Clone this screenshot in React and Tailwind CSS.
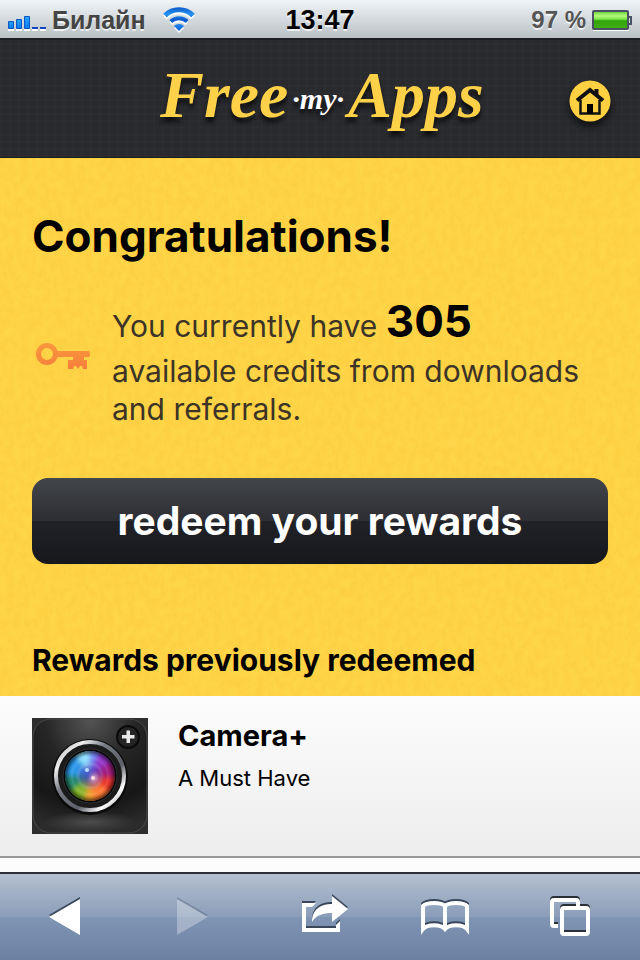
import React from 'react';

const rewards = [{ id: 1, name: 'Camera+', description: 'A Must Have' }];

function StatusBar() {
  return (
    <div className="grid h-10 grid-cols-3 items-center border-b-2 border-[#1d1f22] bg-linear-to-b from-[#eff4f7] to-[#bac1c5] px-2 font-['Liberation_Sans'] text-[25px] font-bold text-[#444] [text-shadow:0_2px_0_#ffffffb0]">
      <div className="flex items-center gap-1">
        <svg width="40" height="24" viewBox="0 0 40 24" aria-hidden="true">
          <defs>
            <linearGradient id="bars" x1="0" y1="0" x2="0" y2="1">
              <stop offset="0" stopColor="#28a6fb" />
              <stop offset="1" stopColor="#0a79ee" />
            </linearGradient>
          </defs>
          <path d="M0 21h6v2H0zM8 21h6v2H8zM16 21h6v2h-6zM24 21h6v2h-6zM32 21h6v2h-6z" fill="#fff" />
          <g fill="url(#bars)" stroke="#0b55c4">
            <path d="M.5 13.500h5v7h-5z" />
            <path d="M8.500 11.500h5v9h-5z" />
            <path d="M16.500 8.500h5v12h-5z" />
          </g>
          <path d="M24 19h6v2h-6zM32 19h6v2h-6z" fill="#1345c2" />
        </svg>
        <span>Билайн</span>
        <svg className="ml-3" width="34" height="28" viewBox="0 0 34 28" aria-hidden="true">
          <defs>
            <linearGradient id="wifi" x1="0" y1="0" x2="0" y2="28" gradientUnits="userSpaceOnUse">
              <stop offset="0" stopColor="#0a50c0" />
              <stop offset=".3" stopColor="#2493f2" />
              <stop offset=".5" stopColor="#0a55cc" />
              <stop offset=".65" stopColor="#1d86ee" />
              <stop offset="1" stopColor="#0850c4" />
            </linearGradient>
            <g id="waves">
              <path d="M3 9.500a20 20 0 0 1 28 0" fill="none" strokeWidth="5" />
              <path d="M8.800 15.500a12 12 0 0 1 16.400 0" fill="none" strokeWidth="4" />
              <path d="M12 20a7 7 0 0 1 10 0L17 25z" strokeWidth="0" />
            </g>
          </defs>
          <use href="#waves" y="2" stroke="#fff" fill="#fff" />
          <use href="#waves" stroke="url(#wifi)" fill="url(#wifi)" />
        </svg>
      </div>
      <time className="text-center text-[27px] text-black">13:47</time>
      <div className="flex items-center justify-end gap-1">
        <span className="text-2xl text-[#555]">97 %</span>
        <svg width="42" height="24" viewBox="0 0 42 24" aria-hidden="true">
          <defs>
            <linearGradient id="charge" x1="0" y1="0" x2="0" y2="1">
              <stop offset="0" stopColor="#70d440" />
              <stop offset=".25" stopColor="#b6fb7c" />
              <stop offset=".45" stopColor="#7be444" />
              <stop offset=".55" stopColor="#31a50c" />
              <stop offset="1" stopColor="#3fae12" />
            </linearGradient>
          </defs>
          <path d="M3 22h36" stroke="#fff" strokeWidth="2" />
          <rect x="3" y="3" width="35" height="18" rx="1" fill="#c9f2ad" stroke="#4b5064" strokeWidth="2" />
          <rect x="4" y="4" width="33" height="16" fill="url(#charge)" />
          <path d="M38 9h3v7h-3" fill="none" stroke="#4b5064" strokeWidth="2" />
        </svg>
      </div>
    </div>
  );
}

function Header() {
  return (
    <header className="flex h-[118px] items-center justify-between border-b border-[#1b1c1f] bg-[#292a2e] bg-[repeating-linear-gradient(0deg,#ffffff03_0_2px,transparent_2px_7px),repeating-linear-gradient(90deg,#ffffff03_0_2px,transparent_2px_9px)] pt-1 pr-7 pl-40">
      <h1 className="flex items-center pb-3 font-['Liberation_Serif'] font-bold text-[#ffd149] italic [text-shadow:0_5px_4px_#000a]">
        <span className="text-[66px] leading-none">Free</span>
        <span className="px-1 pt-2 text-3xl text-white">·my·</span>
        <span className="text-[66px] leading-none">Apps</span>
      </h1>
      <a href="#home" aria-label="Home" className="drop-shadow-[0_5px_4px_#000a]">
        <svg width="44" height="44" viewBox="0 0 44 44" aria-hidden="true">
          <circle cx="22" cy="22" r="20.500" fill="#ffd042" />
          <path d="M9 21.500 22 11l13 10.500" fill="none" stroke="#111" strokeWidth="4" />
          <path d="M26.500 10h4v8l-4-3z" fill="#111" />
          <path d="M12.500 21v13.500h19V21" fill="none" stroke="#111" strokeWidth="2.500" />
          <path d="M19 25h6v10h-6z" fill="#000" />
        </svg>
      </a>
    </header>
  );
}

function Felt() {
  return (
    <svg className="absolute inset-0 -z-10 size-full" aria-hidden="true">
      <filter id="felt" x="0" y="0" width="100%" height="100%" colorInterpolationFilters="sRGB">
        <feTurbulence type="fractalNoise" baseFrequency=".14 .1" numOctaves="3" seed="4" />
        <feColorMatrix values="0 0 0 0 .97  0 0 0 0 .7  0 0 0 0 .14  2.500 0 0 0 -.7" />
      </filter>
      <rect width="100%" height="100%" filter="url(#felt)" opacity=".17" />
    </svg>
  );
}

function KeyIcon() {
  return (
    <svg className="shrink-0" width="60" height="32" viewBox="0 0 60 32" aria-hidden="true">
      <defs>
        <linearGradient id="key" x1="0" y1="0" x2="0" y2="32" gradientUnits="userSpaceOnUse">
          <stop offset="0" stopColor="#f9983c" />
          <stop offset="1" stopColor="#f5783c" />
        </linearGradient>
      </defs>
      <circle cx="15" cy="11" r="8.500" fill="none" stroke="url(#key)" strokeWidth="5" />
      <path d="M25 8h32q2 3 0 6h-5v3h3v9h-4l-1-3h-2l-2 3-2-3h-2l-1 3h-5v-9h5v-3H25z" fill="url(#key)" />
    </svg>
  );
}

function CameraIcon() {
  return (
    <svg className="shrink-0" width="116" height="116" viewBox="0 0 116 116" aria-hidden="true">
      <defs>
        <radialGradient id="body" cx=".5" cy="0" r="1">
          <stop offset="0" stopColor="#555" />
          <stop offset=".4" stopColor="#262626" />
          <stop offset=".75" stopColor="#171717" />
          <stop offset="1" stopColor="#2b2b2b" />
        </radialGradient>
        <linearGradient id="chrome" x1="0" y1="0" x2="1" y2="1">
          <stop offset="0" stopColor="#aaa" />
          <stop offset=".2" stopColor="#eee" />
          <stop offset=".38" stopColor="#777b84" />
          <stop offset=".65" stopColor="#5d6068" />
          <stop offset=".82" stopColor="#fff" />
          <stop offset="1" stopColor="#777" />
        </linearGradient>
        <radialGradient id="glow">
          <stop offset="0" stopColor="#3443c8" stopOpacity=".9" />
          <stop offset=".5" stopColor="#4a40b8" stopOpacity=".5" />
          <stop offset="1" stopColor="#4a40b8" stopOpacity="0" />
        </radialGradient>
        <radialGradient id="rim">
          <stop offset=".8" stopColor="#000" stopOpacity="0" />
          <stop offset="1" stopColor="#000" stopOpacity=".6" />
        </radialGradient>
        <radialGradient id="shine">
          <stop offset="0" stopColor="#777" stopOpacity=".5" />
          <stop offset="1" stopColor="#777" stopOpacity="0" />
        </radialGradient>
        <clipPath id="glass">
          <circle cx="58" cy="58" r="25" />
        </clipPath>
        <filter id="soft" x="-30%" y="-30%" width="160%" height="160%" colorInterpolationFilters="sRGB">
          <feGaussianBlur stdDeviation="2.500" />
        </filter>
      </defs>
      <path d="M0 0h116v116H0z" fill="#2e2e2e" />
      <rect x="1" y="1" width="114" height="114" rx="18" fill="url(#body)" stroke="#484848" />
      <ellipse cx="58" cy="104" rx="46" ry="11" fill="url(#shine)" />
      <circle cx="58" cy="59" r="38" fill="#0b0b0b" />
      <circle cx="58" cy="58" r="34" fill="#1b1b1c" stroke="url(#chrome)" strokeWidth="4" />
      <circle cx="58" cy="58" r="27" fill="#050505" stroke="#303033" />
      <g clipPath="url(#glass)">
        <g filter="url(#soft)">
          <path d="M58 58 34 26h24z" fill="#8fe0ff" />
          <path d="M58 58V26h16z" fill="#7183ee" />
          <path d="m58 58 14-34 20 14z" fill="#9435c8" />
          <path d="m58 58 34-22v26z" fill="#a01c80" />
          <path d="m58 58 34 2-8 22z" fill="#e8352c" />
          <path d="m58 58 28 22-24 10z" fill="#ff7a35" />
          <path d="m58 58 6 32H48z" fill="#f0a030" />
          <path d="M58 58 50 90 28 78z" fill="#86b52b" />
          <path d="M58 58 28 80V58z" fill="#258a70" />
          <path d="M58 58H28l6-32z" fill="#2c97ea" />
        </g>
        <circle cx="58" cy="58" r="15" fill="url(#glow)" />
        <circle cx="58" cy="58" r="25" fill="url(#rim)" />
        <circle cx="58" cy="58" r="18" fill="none" stroke="#fff" strokeOpacity=".08" strokeWidth="2" />
        <circle cx="58" cy="58" r="12" fill="none" stroke="#fff" strokeOpacity=".1" strokeWidth="3" />
        <circle cx="62" cy="60" r="4" fill="#ffc5de" opacity=".85" filter="url(#soft)" />
        <circle cx="55" cy="52" r="2" fill="#b9dcff" />
        <circle cx="61" cy="60" r="2" fill="#ffd9e6" />
      </g>
      <circle cx="96" cy="19" r="11" fill="#242424" stroke="#0a0a0a" strokeWidth="2" />
      <path d="M94.500 12.500h3.500V17h4.500v3.500H98V25h-3.500v-4.500H90V17h4.500z" fill="#e9e9e9" />
    </svg>
  );
}

function Toolbar() {
  return (
    <nav className="flex h-[88px] items-center justify-between border-t-2 border-[#2b3037] bg-[linear-gradient(#b4c0cf,#8a9db9_50%,#8095b4_50%,#6c80a2)] pr-[46px] pl-10 text-white">
      <button type="button" aria-label="Back" className="drop-shadow-[0_-2px_0_#3a4659]">
        <svg width="48" height="44" viewBox="0 0 48 44" aria-hidden="true">
          <path d="M40 4v36L9 22z" fill="currentColor" />
        </svg>
      </button>
      <button type="button" aria-label="Forward" disabled className="opacity-30 drop-shadow-[0_-2px_0_#3a4659]">
        <svg width="48" height="44" viewBox="0 0 48 44" aria-hidden="true">
          <path d="M12 4v36l31-18z" fill="currentColor" />
        </svg>
      </button>
      <button type="button" aria-label="Share" className="drop-shadow-[0_-2px_0_#3a4659]">
        <svg className="overflow-visible" width="54" height="44" viewBox="3 0 54 44" aria-hidden="true">
          <path d="M29 8H15v29h38V26l-4 4v3H19V12h6z" fill="currentColor" />
          <path d="M45 1v8C34 9 25 14 25 27c4-7 11-9 20-9v9l16-13z" fill="currentColor" />
        </svg>
      </button>
      <button type="button" aria-label="Bookmarks" className="drop-shadow-[0_-2px_0_#3a4659]">
        <svg width="48" height="44" viewBox="0 0 48 44" aria-hidden="true">
          <path d="M2 34V11c4-4 18-4 22 0 4-4 18-4 22 0v23c-4-5-18-5-22 0-4-5-18-5-22 0zM24 11v23" fill="none" stroke="currentColor" strokeWidth="4" />
        </svg>
      </button>
      <button type="button" aria-label="Pages" className="drop-shadow-[0_-2px_0_#2b3037]">
        <svg width="48" height="44" viewBox="0 0 48 44" aria-hidden="true">
          <path d="M12 31H8q-2 0-2-2V7q0-2 2-2h22q2 0 2 2v4" fill="none" stroke="currentColor" strokeWidth="4" />
          <rect x="16" y="13" width="26" height="26" rx="2" fill="none" stroke="currentColor" strokeWidth="4" />
        </svg>
      </button>
    </nav>
  );
}

export default function App() {
  return (
    <div className="flex min-h-screen flex-col bg-[#fcfcfc] font-['Inter',sans-serif] text-black">
      <StatusBar />
      <Header />
      <main className="flex-1">
        <section className="relative isolate bg-[#ffd649] px-8 pt-12 pb-4">
          <Felt />
          <h2 className="text-[44px] leading-15 font-bold">Congratulations!</h2>
          <div className="mt-6 flex items-center gap-5">
            <KeyIcon />
            <p className="text-[30px] leading-[38px] text-[#3c3427]">
              You currently have <strong className="text-[44px] leading-[62px] font-bold text-black">305</strong>
              <br />
              available credits from downloads
              <br />
              and referrals.
            </p>
          </div>
          <button type="button" className="mt-[50px] h-[86px] w-full rounded-2xl bg-[linear-gradient(#43464b,#2d2e33_50%,#212227_50%,#17181c)] text-[39px] font-bold text-white">
            redeem your rewards
          </button>
          <h3 className="mt-19 text-[30px] leading-10 font-bold">Rewards previously redeemed</h3>
        </section>
        <ul>
          {rewards.map((reward) => (
            <li key={reward.id} className="flex gap-[30px] border-b-2 border-[#999] bg-linear-to-b from-[#fcfcfc] to-[#ededed] px-8 py-[22px]">
              <CameraIcon />
              <div>
                <h4 className="text-[29px] leading-9 font-bold">{reward.name}</h4>
                <p className="mt-2 text-[22px]">{reward.description}</p>
              </div>
            </li>
          ))}
        </ul>
      </main>
      <Toolbar />
    </div>
  );
}
